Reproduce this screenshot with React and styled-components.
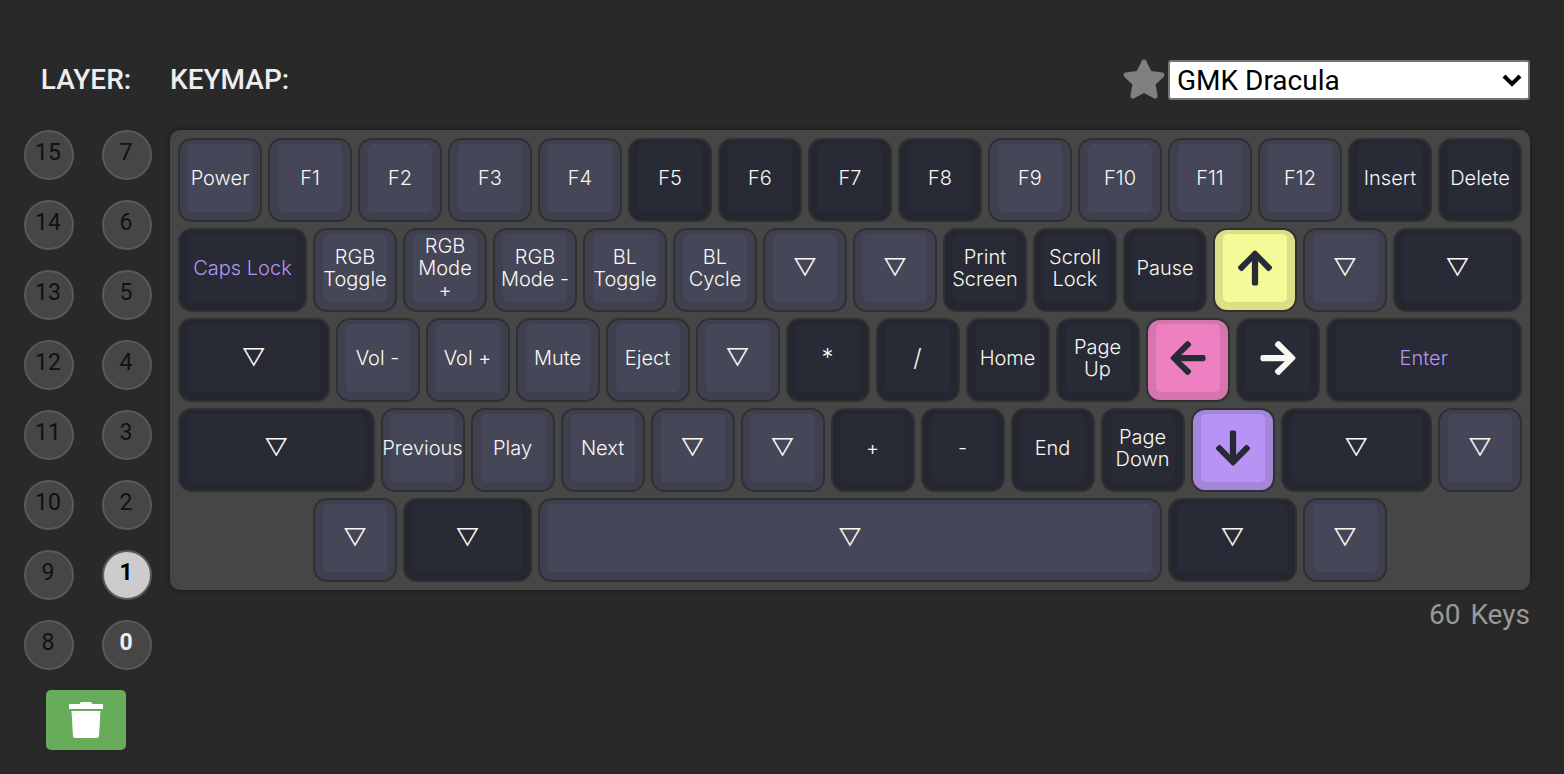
import React, { useState } from "react";
import styled, { createGlobalStyle, css } from "styled-components";
import { FaArrowUp, FaArrowDown, FaArrowLeft, FaArrowRight, FaStar } from "react-icons/fa";

const GlobalStyle = createGlobalStyle`
  * { box-sizing: border-box; }
  body {
    margin: 0;
    background: #292929;
    color: #eeeeee;
    font-family: Roboto, "Liberation Sans", sans-serif;
  }
  button { font-family: inherit; margin: 0; padding: 0; cursor: pointer; }
`;

const Page = styled.main`
  display: flex;
  gap: 18px;
  padding: 60px 34px 24px 24px;
`;

const LayerPanel = styled.section`
  flex: 0 0 128px;
  display: flex;
  flex-direction: column;
`;

const KeymapPanel = styled.section`
  flex: 1 1 0;
  min-width: 0;
  display: flex;
  flex-direction: column;
`;

const PanelHeader = styled.header`
  display: flex;
  align-items: center;
  justify-content: ${(p) => (p.$center ? "center" : "space-between")};
  height: 40px;
  margin-bottom: 30px;
  padding-right: ${(p) => (p.$center ? "4px" : "0")};
`;

const Title = styled.h2`
  margin: 0;
  font-size: 28px;
  line-height: 40px;
  font-weight: 500;
`;

const LayerGrid = styled.div`
  display: grid;
  grid-template-columns: 50px 50px;
  justify-content: space-between;
  row-gap: 20px;
`;

const LayerButton = styled.button`
  width: 50px;
  height: 50px;
  padding: 0 2px 4px 0;
  border: 2px solid #595959;
  border-radius: 50%;
  background: ${(p) => (p.$selected ? "#cccccc" : "#464646")};
  color: ${(p) => (p.$selected ? "#000000" : p.$used ? "#eeeeee" : "#111111")};
  font-size: 23px;
  line-height: 26px;
  font-weight: ${(p) => (p.$selected || p.$used ? 700 : 400)};
`;

const ClearButton = styled.button`
  display: flex;
  align-items: center;
  justify-content: center;
  align-self: center;
  width: 80px;
  height: 60px;
  margin: 20px 4px 0 0;
  border: 0;
  border-radius: 5px;
  background: #67ac5b;
`;

const Tools = styled.div`
  display: flex;
  align-items: center;
  gap: 2px;
`;

const StarButton = styled.button`
  display: flex;
  padding-bottom: 2px;
  border: 0;
  background: none;
  color: #808080;
`;

const SelectBox = styled.label`
  position: relative;
  display: block;
  width: 362px;
`;

const ColorwaySelect = styled.select`
  appearance: none;
  display: block;
  width: 100%;
  height: 40px;
  padding: 0 36px 0 7px;
  border: 2px solid #767676;
  border-radius: 3px;
  background: #ffffff;
  color: #000000;
  font-family: inherit;
  font-size: 28px;
`;

const Chevron = styled.svg`
  position: absolute;
  right: 8px;
  top: 14px;
  pointer-events: none;
`;

const Board = styled.div`
  padding: 5px;
  border-radius: 10px;
  background: #464646;
  box-shadow: 0 0 6px rgba(0, 0, 0, 0.4);
`;

/* Four grid tracks make one key unit, so quarter-unit keys land exactly. */
const KeyRow = styled.div`
  display: grid;
  grid-template-columns: repeat(60, minmax(0, 1fr));
  height: 90px;
`;

const KeyCell = styled.div`
  grid-column: span ${(p) => p.$units * 4};
  display: flex;
  padding: 3px;
`;

const palettes = {
  alpha: css`
    --side: #3e4050;
    --top: #454658;
    --ink: #f8f8f2;
  `,
  mod: css`
    --side: #242630;
    --top: #282a35;
    --ink: #f8f8f2;
  `,
  accent: css`
    --side: #242630;
    --top: #282a35;
    --ink: #b794f3;
  `,
  yellow: css`
    --side: #dbe087;
    --top: #f3fa97;
    --ink: #282a35;
  `,
  pink: css`
    --side: #d574ad;
    --top: #ee80c1;
    --ink: #282a35;
  `,
  purple: css`
    --side: #a485da;
    --top: #b794f3;
    --ink: #282a35;
  `,
};

const Keycap = styled.button`
  ${(p) => palettes[p.$tone]}
  flex: 1 1 0;
  min-width: 0;
  display: flex;
  padding: 4px 8px 8px;
  border: 2px solid #303030;
  border-radius: 14px;
  background: var(--side);
  color: var(--ink);
`;

const KeyTop = styled.span`
  flex: 1 1 0;
  min-width: 0;
  display: flex;
  align-items: center;
  justify-content: center;
  border-radius: 5px;
  background: var(--top);
  font-family: Inter, "DejaVu Sans", sans-serif;
  font-size: ${(p) => (p.$symbol ? "24px" : "20px")};
  line-height: 22px;
  font-weight: 300;
  text-align: center;
  white-space: pre;
`;

const KeyCount = styled.p`
  display: flex;
  justify-content: flex-end;
  gap: 10px;
  margin: 5px 0 0;
  color: #999999;
  font-size: 28px;
  line-height: 40px;
`;

function TrashIcon() {
  return (
    <svg width="34" height="36" viewBox="0 0 34 36" fill="#ffffff" aria-hidden="true">
      <path d="M0 2h10.500q.5-2 2.500-2h8q2 0 2.500 2H34v5H0z" />
      <path d="M2.500 9h29l-1.500 25q-.2 2-2.200 2H6.200Q4.200 36 4 34z" />
    </svg>
  );
}

const transparent = (units = 1, tone = "alpha") => ["▽", tone, units];
const blank = (units) => [null, null, units];

const symbols = ["▽", "*", "/"];

const arrows = {
  Up: FaArrowUp,
  Down: FaArrowDown,
  Left: FaArrowLeft,
  Right: FaArrowRight,
};

const rows = [
  [
    ["Power"], ["F1"], ["F2"], ["F3"], ["F4"],
    ["F5", "mod"], ["F6", "mod"], ["F7", "mod"], ["F8", "mod"],
    ["F9"], ["F10"], ["F11"], ["F12"], ["Insert", "mod"], ["Delete", "mod"],
  ],
  [
    ["Caps Lock", "accent", 1.5],
    ["RGB\nToggle"], ["RGB\nMode\n+"], ["RGB\nMode -"], ["BL\nToggle"], ["BL\nCycle"],
    transparent(), transparent(),
    ["Print\nScreen", "mod"], ["Scroll\nLock", "mod"], ["Pause", "mod"],
    ["Up", "yellow"], transparent(), transparent(1.5, "mod"),
  ],
  [
    transparent(1.75, "mod"),
    ["Vol -"], ["Vol +"], ["Mute"], ["Eject"], transparent(),
    ["*", "mod"], ["/", "mod"], ["Home", "mod"], ["Page\nUp", "mod"],
    ["Left", "pink"], ["Right", "mod"], ["Enter", "accent", 2.25],
  ],
  [
    transparent(2.25, "mod"),
    ["Previous"], ["Play"], ["Next"], transparent(), transparent(),
    ["+", "mod"], ["-", "mod"], ["End", "mod"], ["Page\nDown", "mod"],
    ["Down", "purple"], transparent(1.75, "mod"), transparent(),
  ],
  [
    blank(1.5), transparent(), transparent(1.5, "mod"), transparent(7),
    transparent(1.5, "mod"), transparent(), blank(1.5),
  ],
];

function Key({ label, tone = "alpha", units = 1 }) {
  const Arrow = arrows[label];
  return (
    <KeyCell $units={units}>
      {label && (
        <Keycap type="button" $tone={tone} aria-label={Arrow ? label : undefined}>
          <KeyTop $symbol={symbols.includes(label)}>
            {Arrow ? <Arrow size={40} /> : label}
          </KeyTop>
        </Keycap>
      )}
    </KeyCell>
  );
}

const layers = [15, 7, 14, 6, 13, 5, 12, 4, 11, 3, 10, 2, 9, 1, 8, 0];

export default function App() {
  const [layer, setLayer] = useState(1);
  return (
    <>
      <GlobalStyle />
      <Page>
        <LayerPanel>
          <PanelHeader $center>
            <Title>LAYER:</Title>
          </PanelHeader>
          <LayerGrid>
            {layers.map((n) => (
              <LayerButton
                key={n}
                type="button"
                $selected={n === layer}
                $used={n < 2}
                aria-pressed={n === layer}
                onClick={() => setLayer(n)}
              >
                {n}
              </LayerButton>
            ))}
          </LayerGrid>
          <ClearButton type="button" aria-label="Clear layer">
            <TrashIcon />
          </ClearButton>
        </LayerPanel>
        <KeymapPanel>
          <PanelHeader>
            <Title>KEYMAP:</Title>
            <Tools>
              <StarButton type="button" aria-label="Favorite">
                <FaStar size={44} />
              </StarButton>
              <SelectBox>
                <ColorwaySelect aria-label="Colorway" defaultValue="dracula">
                  <option value="dracula">GMK Dracula</option>
                </ColorwaySelect>
                <Chevron width="20" height="14" viewBox="0 0 20 14" fill="none" stroke="#000000" strokeWidth="4" aria-hidden="true">
                  <path d="M2 2l8 8 8-8" />
                </Chevron>
              </SelectBox>
            </Tools>
          </PanelHeader>
          <Board>
            {rows.map((row, r) => (
              <KeyRow key={r}>
                {row.map(([label, tone, units], k) => (
                  <Key key={k} label={label} tone={tone} units={units} />
                ))}
              </KeyRow>
            ))}
          </Board>
          <KeyCount>
            <span>60</span>
            <span>Keys</span>
          </KeyCount>
        </KeymapPanel>
      </Page>
    </>
  );
}
